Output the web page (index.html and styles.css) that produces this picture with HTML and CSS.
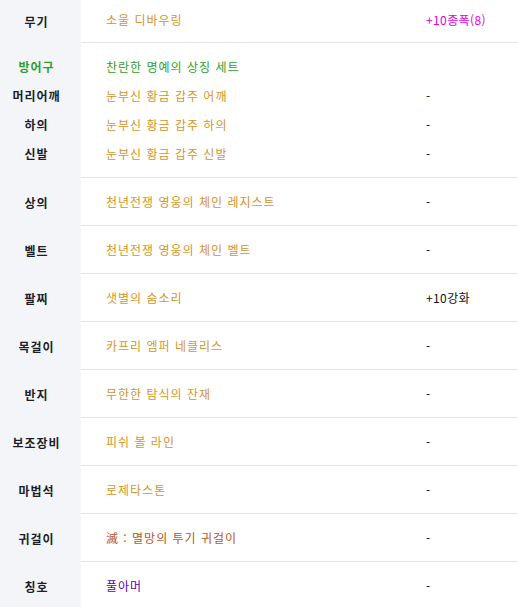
FILE: index.html
```html
<!DOCTYPE html>
<html lang="ko">
<head>
<meta charset="utf-8">
<link rel="stylesheet" href="styles.css">
</head>
<body>
<div class="table">
  <div class="row first">
    <div class="label">무기</div>
    <div class="cells">
      <div class="line"><span class="name orange">소울 디바우링</span><span class="extra magenta">+10종폭(8)</span></div>
    </div>
  </div>
  <div class="row group">
    <div class="label stack">
      <span class="green">방어구</span>
      <span>머리어깨</span>
      <span>하의</span>
      <span>신발</span>
    </div>
    <div class="cells stack">
      <div class="line"><span class="name green">찬란한 명예의 상징 세트</span><span class="extra"></span></div>
      <div class="line"><span class="name orange">눈부신 황금 갑주 어깨</span><span class="extra">-</span></div>
      <div class="line"><span class="name orange">눈부신 황금 갑주 하의</span><span class="extra">-</span></div>
      <div class="line"><span class="name orange">눈부신 황금 갑주 신발</span><span class="extra">-</span></div>
    </div>
  </div>
  <div class="row">
    <div class="label">상의</div>
    <div class="cells"><div class="line"><span class="name orange">천년전쟁 영웅의 체인 레지스트</span><span class="extra">-</span></div></div>
  </div>
  <div class="row">
    <div class="label">벨트</div>
    <div class="cells"><div class="line"><span class="name orange">천년전쟁 영웅의 체인 벨트</span><span class="extra">-</span></div></div>
  </div>
  <div class="row">
    <div class="label">팔찌</div>
    <div class="cells"><div class="line"><span class="name orange">샛별의 숨소리</span><span class="extra">+10강화</span></div></div>
  </div>
  <div class="row">
    <div class="label">목걸이</div>
    <div class="cells"><div class="line"><span class="name orange">카프리 엠퍼 네클리스</span><span class="extra">-</span></div></div>
  </div>
  <div class="row">
    <div class="label">반지</div>
    <div class="cells"><div class="line"><span class="name orange">무한한 탐식의 잔재</span><span class="extra">-</span></div></div>
  </div>
  <div class="row">
    <div class="label">보조장비</div>
    <div class="cells"><div class="line"><span class="name orange">피쉬 볼 라인</span><span class="extra">-</span></div></div>
  </div>
  <div class="row">
    <div class="label">마법석</div>
    <div class="cells"><div class="line"><span class="name orange">로제타스톤</span><span class="extra">-</span></div></div>
  </div>
  <div class="row">
    <div class="label">귀걸이</div>
    <div class="cells"><div class="line"><span class="name brown">滅 : 멸망의 투기 귀걸이</span><span class="extra">-</span></div></div>
  </div>
  <div class="row">
    <div class="label">칭호</div>
    <div class="cells"><div class="line"><span class="name purple">풀아머</span><span class="extra">-</span></div></div>
  </div>
</div>
</body>
</html>
```
FILE: styles.css
```css
html, body {
  margin: 0;
  padding: 0;
  background: #ffffff;
}
body {
  font-family: "Noto Sans CJK KR", "Noto Sans", sans-serif;
  font-size: 12px;
  color: #111111;
}
.table {
  width: 518px;
  display: flex;
  flex-direction: column;
}
.row {
  display: flex;
  height: 48px;
}
.row.first {
  height: 43px;
}
.row.group {
  height: 135px;
}
.label {
  width: 73px;
  padding-right: 8px;
  flex: none;
  background: #f3f5f9;
  font-weight: bold;
  color: #1e1e2a;
  letter-spacing: 1px;
  display: flex;
  align-items: center;
  justify-content: center;
  line-height: 29px;
}
.label.stack {
  flex-direction: column;
  justify-content: flex-start;
  padding-top: 9px;
  box-sizing: border-box;
  width: 81px;
  padding-right: 8px;
}
.cells {
  flex: 1;
  border-bottom: 1px solid #e6e6e9;
  display: flex;
  flex-direction: column;
  justify-content: center;
}
.row.first .cells {
  padding-bottom: 4px;
}
.cells.stack {
  justify-content: flex-start;
  padding-top: 9px;
}
.line {
  display: flex;
  height: 29px;
  align-items: center;
  padding-left: 25px;
}
.name {
  width: 320px;
  flex: none;
  letter-spacing: 1px;
}
.extra {
  color: #111111;
  letter-spacing: 0.4px;
}
.orange { color: #d4951f; }
.green { color: #2e9e2e; }
.magenta { color: #e000e0; }
.brown { color: #b4561f; }
.purple { color: #5a00b4; }
```
